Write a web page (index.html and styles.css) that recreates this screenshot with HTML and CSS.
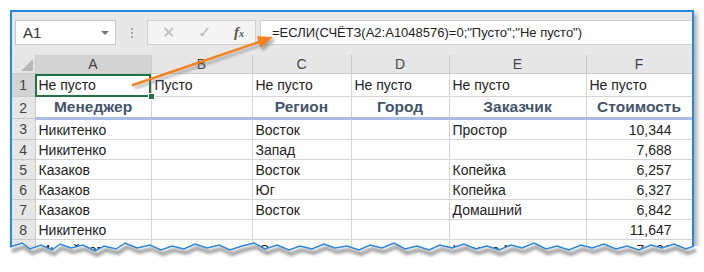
FILE: index.html
```html
<!DOCTYPE html>
<html lang="ru">
<head>
    <meta charset="UTF-8">
    <title>СЧЁТЗ - Excel</title>
    <link rel="stylesheet" href="styles.css">
</head>
<body>
    <div class="frame">
        <div class="toolbar">
            <div class="namebox">
                <span>A1</span>
                <span class="drop"></span>
            </div>
            <div class="dots"><i></i><i></i><i></i></div>
            <div class="fxbox">
                <span class="btn">&#x2715;</span>
                <span class="btn">&#x2713;</span>
                <span class="fx">f<sub>x</sub></span>
            </div>
            <div class="formula">=ЕСЛИ(СЧЁТЗ(A2:A1048576)=0;"Пусто";"Не пусто")</div>
        </div>

        <table class="sheet">
            <colgroup>
                <col class="c-num">
                <col class="c-a">
                <col class="c-b">
                <col class="c-c">
                <col class="c-d">
                <col class="c-e">
                <col class="c-f">
            </colgroup>
            <tr class="colhead">
                <th class="corner"><span class="tri"></span></th>
                <th class="sel">A</th>
                <th>B</th>
                <th>C</th>
                <th>D</th>
                <th>E</th>
                <th>F</th>
            </tr>
            <tr class="r1">
                <th class="sel">1</th>
                <td class="active">Не пусто<span class="handle"></span></td>
                <td>Пусто</td>
                <td>Не пусто</td>
                <td>Не пусто</td>
                <td>Не пусто</td>
                <td>Не пусто</td>
            </tr>
            <tr class="hdr">
                <th>2</th>
                <td>Менеджер</td>
                <td></td>
                <td>Регион</td>
                <td>Город</td>
                <td>Заказчик</td>
                <td>Стоимость</td>
            </tr>
            <tr>
                <th>3</th>
                <td>Никитенко</td><td></td><td>Восток</td><td></td><td>Простор</td><td class="num">10,344</td>
            </tr>
            <tr>
                <th>4</th>
                <td>Никитенко</td><td></td><td>Запад</td><td></td><td></td><td class="num">7,688</td>
            </tr>
            <tr>
                <th>5</th>
                <td>Казаков</td><td></td><td>Восток</td><td></td><td>Копейка</td><td class="num">6,257</td>
            </tr>
            <tr>
                <th>6</th>
                <td>Казаков</td><td></td><td>Юг</td><td></td><td>Копейка</td><td class="num">6,327</td>
            </tr>
            <tr>
                <th>7</th>
                <td>Казаков</td><td></td><td>Восток</td><td></td><td>Домашний</td><td class="num">6,842</td>
            </tr>
            <tr>
                <th>8</th>
                <td>Никитенко</td><td></td><td></td><td></td><td></td><td class="num">11,647</td>
            </tr>
            <tr>
                <th>9</th>
                <td>Михайлов</td><td></td><td>Юг</td><td></td><td>Корона Минск</td><td class="num">7,301</td>
            </tr>
        </table>
    </div>

    <!-- стрелка и рваный край поверх скриншота -->
    <svg class="overlay" width="704" height="272" viewBox="0 0 704 272">
        <defs>
            <filter id="blur" x="-10%" y="-50%" width="120%" height="200%">
                <feGaussianBlur stdDeviation="1.6"/>
            </filter>
        </defs>
        <g filter="url(#blur)" fill="#777" stroke="#777" opacity="0.6">
            <line x1="135" y1="88" x2="261" y2="45" stroke-width="2.5"/>
            <polygon points="275,40 262.7,50.6 258.9,39.2"/>
        </g>
        <line x1="133" y1="85" x2="259" y2="42" stroke="#f5821f" stroke-width="2.5" stroke-linecap="round"/>
        <polygon points="273,37 260.7,47.6 256.9,36.2" fill="#f5821f"/>

        <polygon fill="#fff" points="0,247 10,247 22,243 30,249 41,245 52,250 60,244 71,248 83,245 95,251 104,246 116,249 125,243 137,248 150,245 161,250 172,246 184,249 195,244 207,248 219,245 230,250 242,246 254,243 265,249 277,245 289,250 300,246 312,249 324,244 335,248 347,246 359,250 370,245 382,248 394,243 405,249 417,246 429,250 440,245 452,248 464,244 476,249 487,246 499,250 511,245 522,248 534,243 546,249 557,246 569,250 581,245 592,248 604,244 616,249 627,246 639,250 651,245 662,248 674,244 686,249 694,246 704,246 704,272 0,272"/>
        <polyline filter="url(#blur)" fill="none" stroke="#555" stroke-width="4" opacity="0.55" transform="translate(2,4)" points="10,247 22,243 30,249 41,245 52,250 60,244 71,248 83,245 95,251 104,246 116,249 125,243 137,248 150,245 161,250 172,246 184,249 195,244 207,248 219,245 230,250 242,246 254,243 265,249 277,245 289,250 300,246 312,249 324,244 335,248 347,246 359,250 370,245 382,248 394,243 405,249 417,246 429,250 440,245 452,248 464,244 476,249 487,246 499,250 511,245 522,248 534,243 546,249 557,246 569,250 581,245 592,248 604,244 616,249 627,246 639,250 651,245 662,248 674,244 686,249 694,246"/>
        <polyline fill="none" stroke="#2b88d8" stroke-width="1.5" points="10,247 22,243 30,249 41,245 52,250 60,244 71,248 83,245 95,251 104,246 116,249 125,243 137,248 150,245 161,250 172,246 184,249 195,244 207,248 219,245 230,250 242,246 254,243 265,249 277,245 289,250 300,246 312,249 324,244 335,248 347,246 359,250 370,245 382,248 394,243 405,249 417,246 429,250 440,245 452,248 464,244 476,249 487,246 499,250 511,245 522,248 534,243 546,249 557,246 569,250 581,245 592,248 604,244 616,249 627,246 639,250 651,245 662,248 674,244 686,249 694,246"/>
    </svg>
</body>
</html>
```

FILE: styles.css
```css
body {
    margin: 0;
    background-color: #fff;
    font-family: 'Liberation Sans', Arial, sans-serif;
    color: #222;
    position: relative;
    width: 704px;
    height: 272px;
    overflow: hidden;
}
.frame {
    margin: 10px 0 0 10px;
    width: 680px;
    height: 250px;
    border: 2px solid #2b88d8;
    border-bottom: none;
    background-color: #e8e8e8;
    box-shadow: 3px 3px 5px rgba(0, 0, 0, 0.35);
    overflow: hidden;
}
.toolbar {
    height: 43px;
    display: flex;
    align-items: flex-start;
    padding-top: 8px;
    box-sizing: border-box;
}
.namebox {
    margin-left: 3px;
    width: 101px;
    height: 25px;
    box-sizing: border-box;
    border: 1px solid #c8c8c8;
    background-color: #fff;
    display: flex;
    align-items: center;
    justify-content: space-between;
    padding: 0 6px 0 7px;
    font-size: 15px;
    color: #333;
}
.drop {
    width: 0;
    height: 0;
    border-left: 4px solid transparent;
    border-right: 4px solid transparent;
    border-top: 4px solid #777;
}
.dots {
    width: 31px;
    height: 25px;
    display: flex;
    flex-direction: column;
    align-items: center;
    justify-content: center;
    gap: 2px;
}
.dots i {
    width: 2px;
    height: 2px;
    background-color: #a8a8a8;
}
.fxbox {
    width: 109px;
    height: 25px;
    box-sizing: border-box;
    border: 1px solid #cfcfcf;
    background-color: #f4f4f4;
    display: flex;
    align-items: center;
    padding-left: 14px;
}
.btn {
    width: 36px;
    color: #b9b9b9;
    font-family: 'DejaVu Sans', sans-serif;
    font-size: 16px;
}
.fx {
    font-family: 'Liberation Serif', serif;
    font-style: italic;
    font-weight: bold;
    font-size: 15px;
    color: #555;
}
.fx sub {
    font-size: 10px;
    vertical-align: 0;
}
.formula {
    flex: 1;
    margin-left: 4px;
    height: 25px;
    box-sizing: border-box;
    border: 1px solid #cfcfcf;
    border-right: none;
    background-color: #fff;
    padding-left: 11px;
    line-height: 23px;
    font-size: 13px;
    color: #222;
    white-space: nowrap;
}
.sheet {
    border-collapse: collapse;
    table-layout: fixed;
    width: 680px;
    background-color: #fff;
    font-size: 14px;
}
.c-num { width: 23px; }
.c-a { width: 116px; }
.c-b { width: 101px; }
.c-c { width: 99px; }
.c-d { width: 98px; }
.c-e { width: 137px; }
.c-f { width: 106px; }
.sheet th,
.sheet td {
    border: 1px solid #d4d4d4;
    padding: 0 3px;
    height: 19px;
    white-space: nowrap;
    overflow: hidden;
    text-align: left;
}
.sheet th {
    background-color: #e6e6e6;
    color: #444;
    font-weight: normal;
    text-align: center;
    padding: 0;
    border-color: #c9c9c9;
}
.colhead th {
    height: 18px;
    font-size: 14px;
    border-top: none;
}
.sheet tr th:first-child {
    border-left: none;
}
.sheet th.sel {
    background-color: #d3d3d3;
}
.corner {
    position: relative;
}
.tri {
    position: absolute;
    right: 2px;
    bottom: 2px;
    width: 0;
    height: 0;
    border-left: 12px solid transparent;
    border-bottom: 12px solid #b9b9b9;
}
.r1 td,
.r1 th {
    height: 22px;
}
.active {
    position: relative;
    outline: 2px solid #217346;
    outline-offset: -2px;
    overflow: visible !important;
}
.handle {
    position: absolute;
    right: -4px;
    bottom: -4px;
    width: 5px;
    height: 5px;
    background-color: #217346;
    border: 1px solid #fff;
}
.hdr td {
    height: 20px;
    border-bottom: 3px solid #a9bde4;
    font-weight: bold;
    color: #44546a;
    text-align: center;
    font-size: 15.5px;
}
.hdr th {
    border-bottom: 1px solid #c9c9c9;
}
.num {
    text-align: right !important;
    padding-right: 20px !important;
}
.overlay {
    position: absolute;
    top: 0;
    left: 0;
    pointer-events: none;
}
```
